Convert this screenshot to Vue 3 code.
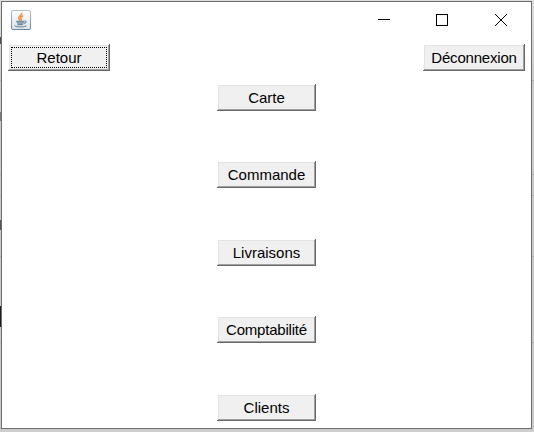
<script setup>
const entries = ['Carte', 'Commande', 'Livraisons', 'Comptabilité', 'Clients']
</script>

<template>
  <div class="desktop">
    <div class="window">
      <header class="titlebar">
        <svg class="java" width="20" height="20" viewBox="0 0 20 20">
          <defs>
            <linearGradient id="tile" x1="0" y1="0" x2="0" y2="1">
              <stop offset="0" stop-color="#ffffff" />
              <stop offset="1" stop-color="#dde2e6" />
            </linearGradient>
            <linearGradient id="edge" x1="0" y1="0" x2="0" y2="1">
              <stop offset="0" stop-color="#b4c0c8" />
              <stop offset="1" stop-color="#6787a0" />
            </linearGradient>
          </defs>
          <rect x="0.5" y="0.5" width="19" height="19" rx="1.5" fill="url(#tile)" stroke="url(#edge)" />
          <path d="M10.6 2.8C11.6 5 7.2 6.2 7.6 8.2C7.8 9.2 8.8 9.6 9.2 10.6M12.2 5.8C9.8 6.8 9 7.8 10 8.8C10.6 9.6 10.4 10.2 9.8 10.8" fill="none" stroke="#ee9148" stroke-width="1.6" />
          <path d="M5.2 11.4H13.2L12 15H6.8Z" fill="#8ba3b5" />
          <path d="M5.2 11.4H13M6.6 14.6H12M13.2 11.2C16.2 10.4 15.4 13.2 12.8 13.6" fill="none" stroke="#6c8ba3" stroke-width="1.1" />
          <path d="M4 15.4C2.6 16.9 13.8 17.6 15.4 15.7" fill="none" stroke="#7894a9" stroke-width="1.2" />
        </svg>
        <div class="controls">
          <svg width="12" height="12" viewBox="0 0 12 12" shape-rendering="crispEdges"><path d="M0 5.5H12" /></svg>
          <svg width="12" height="12" viewBox="0 0 12 12" shape-rendering="crispEdges"><path d="M.5 .5H11.5V11.5H.5Z" /></svg>
          <svg width="12" height="12" viewBox="0 0 12 12"><path d="M0 0L12 12M12 0L0 12" /></svg>
        </div>
      </header>
      <nav class="toolbar">
        <button class="btn focused"><span>Retour</span></button>
        <button class="btn tight"><span>Déconnexion</span></button>
      </nav>
      <main class="menu">
        <button
          v-for="entry in entries"
          :key="entry"
          class="btn"
          :class="{ tight: entry.length > 10 }"
        ><span>{{ entry }}</span></button>
      </main>
    </div>
  </div>
</template>

<style>
body {
  overflow: hidden;
}
</style>

<style scoped>
.desktop {
  box-sizing: border-box;
  width: 534px;
  height: 432px;
  padding: 1px 2px 3px 1px;
  background:
    linear-gradient(#7b7b7b, #7b7b7b) 0 112px / 1px 9px no-repeat,
    linear-gradient(#505050, #505050) 0 37px / 1px 7px no-repeat,
    linear-gradient(#555, #555) 0 220px / 1px 10px no-repeat,
    linear-gradient(#1c1c1c, #1c1c1c) 0 306px / 2px 21px no-repeat,
    linear-gradient(#b0b0b0, #b0b0b0) 0 80px / 100% 1px no-repeat,
    linear-gradient(#b0b0b0, #b0b0b0) 0 174px / 100% 1px no-repeat,
    linear-gradient(#b0b0b0, #b0b0b0) 0 195px / 100% 1px no-repeat,
    linear-gradient(#b0b0b0, #b0b0b0) 0 256px / 100% 1px no-repeat,
    linear-gradient(#b0b0b0, #b0b0b0) 0 342px / 100% 1px no-repeat,
    linear-gradient(#dedede, #cbcbcb 80px, #c8c8c8 428px, #d0d0d0);
}
.window {
  box-sizing: border-box;
  height: 428px;
  border: 1px solid #6e6e6e;
  background: #fff;
}
.titlebar {
  display: flex;
  justify-content: space-between;
  align-items: flex-start;
  height: 42px;
  box-sizing: border-box;
  padding: 8px 24px 0 9px;
}
.java {
  display: block;
}
.controls {
  display: flex;
  gap: 47px;
  padding-top: 4px;
}
.controls svg {
  display: block;
  fill: none;
  stroke: #000;
  stroke-width: 1;
}
.controls svg:first-child {
  margin-right: -1px;
}
.toolbar {
  display: flex;
  justify-content: space-between;
  padding: 0 6px;
}
.btn {
  box-sizing: border-box;
  display: flex;
  justify-content: center;
  align-items: center;
  width: 102px;
  height: 27px;
  margin: 0;
  padding: 2px;
  border: 0;
  border-radius: 0;
  outline: none;
  background: #f0f0f0;
  box-shadow:
    inset -1px -1px #696969,
    inset 1px 1px #fff,
    inset -2px -2px #a0a0a0,
    inset 2px 2px #e3e3e3;
  font: 15px/17px "Liberation Sans", Arial, sans-serif;
  color: #000;
  white-space: nowrap;
}
.tight {
  letter-spacing: -0.2px;
}
.focused span {
  box-sizing: border-box;
  width: 96px;
  height: 21px;
  padding-top: 1px;
  border: 1px dotted #000;
}
.menu {
  display: grid;
  grid-template-rows: 77px 78px 77px 78px 27px;
  justify-content: center;
  padding: 13px 0 0;
}
.menu .btn {
  width: 99px;
}
</style>
